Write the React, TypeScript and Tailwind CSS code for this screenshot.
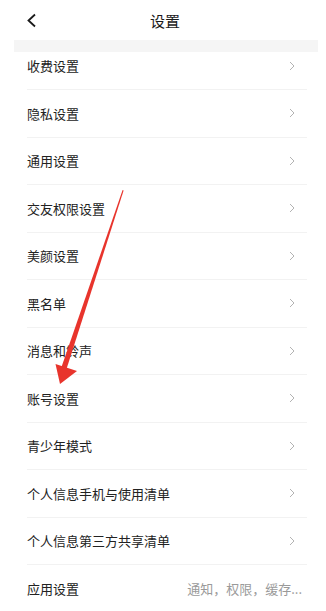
const rows: { label: string; extra?: string }[] = [
  { label: "收费设置" },
  { label: "隐私设置" },
  { label: "通用设置" },
  { label: "交友权限设置" },
  { label: "美颜设置" },
  { label: "黑名单" },
  { label: "消息和铃声" },
  { label: "账号设置" },
  { label: "青少年模式" },
  { label: "个人信息手机与使用清单" },
  { label: "个人信息第三方共享清单" },
  { label: "应用设置", extra: "通知，权限，缓存..." },
];

function Chevron() {
  return (
    <svg width="6" height="10" viewBox="0 0 6 10" className="shrink-0">
      <polyline points="1,1 5,5 1,9" fill="none" stroke="#b3b3b3" strokeWidth="1" />
    </svg>
  );
}

export default function App() {
  return (
    <div
      className="relative w-[326px] h-[611px] overflow-hidden bg-white text-[#222]"
      style={{ fontFamily: '"Noto Sans CJK SC", "Noto Sans", sans-serif' }}
    >
      <div className="grid h-[40px] grid-cols-[1fr_auto_1fr] items-center">
        <div className="pl-[26px]">
          <svg width="11" height="15" viewBox="0 0 11 15">
            <polyline points="9,1.5 2.5,7.5 9,13.5" fill="none" stroke="#1a1a1a" strokeWidth="1.8" />
          </svg>
        </div>
        <div className="pl-[4px] text-[15px] leading-none text-[#1a1a1a]">设置</div>
        <div />
      </div>

      <div className="ml-[14px] mr-[8px] h-[12px] bg-[#f5f5f5]" />

      <div className="ml-[27px] mr-[19px]">
        {rows.map((row, i) => (
          <div
            key={row.label}
            className={
              i === 0
                ? "flex h-[38px] items-center justify-between border-b border-[#f2f2f2] pb-[10px] pr-[12px]"
                : "flex h-[47.5px] items-center justify-between border-b border-[#f2f2f2] pr-[12px]"
            }
          >
            <span className="text-[13px] leading-none">{row.label}</span>
            {row.extra ? (
              <span className="-mr-[7px] text-[13px] leading-none text-[#9a9a9a]">{row.extra}</span>
            ) : (
              <Chevron />
            )}
          </div>
        ))}
      </div>

      <svg
        className="pointer-events-none absolute left-0 top-0"
        width="326"
        height="611"
        viewBox="0 0 326 611"
      >
        <polygon points="122.6,190 123.6,190.6 66.5,369 61.5,367" fill="#e8342c" />
        <polygon points="60,384 55.5,364 77,371" fill="#e8342c" />
      </svg>
    </div>
  );
}
